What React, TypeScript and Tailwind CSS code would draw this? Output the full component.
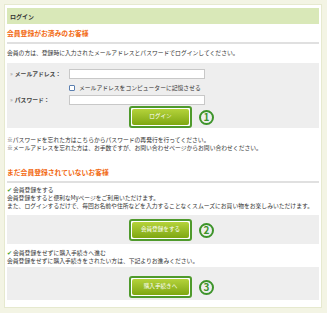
import React from "react";

const font = { fontFamily: '"Noto Sans CJK JP", "Noto Sans", sans-serif' };

const GreenButton = ({ label, num }: { label: string; num: string }) => (
  <div className="flex items-center">
    <div className="ml-[122px] w-[63px] h-[22px] rounded-[3px] border-2 border-[#4f9a2c] bg-white p-[1px]">
      <div className="w-full h-full rounded-[2px] bg-gradient-to-b from-[#b5d33a] to-[#7ea70f] flex items-center justify-center text-white text-[5.6px] leading-none">
        {label}
      </div>
    </div>
    <div className="ml-[7px] w-[15px] h-[15px] rounded-full border-2 border-[#3d942a] flex items-center justify-center text-[#3d942a] text-[10px] font-bold leading-none">
      {num}
    </div>
  </div>
);

const Heading = ({ children }: { children: React.ReactNode }) => (
  <div className="h-[20px] flex items-center border-b-2 border-[#e0e0e0] text-[#f26a12] text-[6.8px] font-bold">
    {children}
  </div>
);

const Line = ({ children }: { children: React.ReactNode }) => (
  <div className="h-[8px] leading-[8px] text-[5.8px] text-[#333] whitespace-nowrap">
    {children}
  </div>
);

const Check = () => <span className="text-[#4aa02c] text-[6px] mr-[1px]">✔</span>;

const App: React.FC = () => {
  return (
    <div className="w-[327px] h-[313px] bg-[#f3f4e4] p-[4px]" style={font}>
      <div className="w-[318px] h-[304px] bg-white border border-[#e6e9cf] pt-[3px] px-[2px]">
        <div className="h-[16px] bg-[#d9e8b8] flex items-center pl-[3px] text-[6px] text-[#333] font-bold">
          ログイン
        </div>

        <Heading>会員登録がお済みのお客様</Heading>
        <div className="h-[19px] flex items-center text-[5.8px] text-[#333] whitespace-nowrap">
          会員の方は、登録時に入力されたメールアドレスとパスワードでログインしてください。
        </div>

        <div className="h-[65px] bg-[#eeeeee] pt-[6px]">
          <div className="flex items-center h-[10px]">
            <div className="w-[62px] pl-[3px] text-[5.8px] font-bold text-[#444] whitespace-nowrap">
              <span className="text-[#999] font-normal mr-[2px]">»</span>メールアドレス：
            </div>
            <div className="w-[136px] h-[10px] bg-white border border-[#c8c8c8]" />
          </div>
          <div className="flex items-center h-[8px] mt-[5px] pl-[62px]">
            <div className="w-[6px] h-[6px] border border-[#5a7fb0] bg-white rounded-[1px]" />
            <div className="ml-[4px] text-[5.8px] text-[#333] whitespace-nowrap">
              メールアドレスをコンピューターに記憶させる
            </div>
          </div>
          <div className="flex items-center h-[10px] mt-[3px]">
            <div className="w-[62px] pl-[3px] text-[5.8px] font-bold text-[#444] whitespace-nowrap">
              <span className="text-[#999] font-normal mr-[2px]">»</span>パスワード：
            </div>
            <div className="w-[136px] h-[10px] bg-white border border-[#c8c8c8]" />
          </div>
          <div className="mt-[1px]">
            <GreenButton label="ログイン" num="1" />
          </div>
        </div>

        <div className="mt-[8px]">
          <Line>※パスワードを忘れた方はこちらからパスワードの再発行を行ってください。</Line>
          <Line>※メールアドレスを忘れた方は、お手数ですが、お問い合わせページからお問い合わせください。</Line>
        </div>

        <div className="mt-[11px]">
          <Heading>まだ会員登録されていないお客様</Heading>
        </div>

        <div className="mt-[3px]">
          <Line>
            <Check />会員登録をする
          </Line>
          <Line>会員登録をすると便利なMyページをご利用いただけます。</Line>
          <Line>また、ログインするだけで、毎回お名前や住所などを入力することなくスムーズにお買い物をお楽しみいただけます。</Line>
        </div>

        <div className="mt-[5px] h-[29px] bg-[#eeeeee] pt-[4px]">
          <GreenButton label="会員登録をする" num="2" />
        </div>

        <div className="mt-[5px]">
          <Line>
            <Check />会員登録をせずに購入手続きへ進む
          </Line>
          <Line>会員登録をせずに購入手続きをされたい方は、下記よりお進みください。</Line>
        </div>

        <div className="mt-[2px] h-[33px] bg-[#eeeeee] pt-[9px]">
          <GreenButton label="購入手続きへ" num="3" />
        </div>
      </div>
    </div>
  );
};

export default App;
